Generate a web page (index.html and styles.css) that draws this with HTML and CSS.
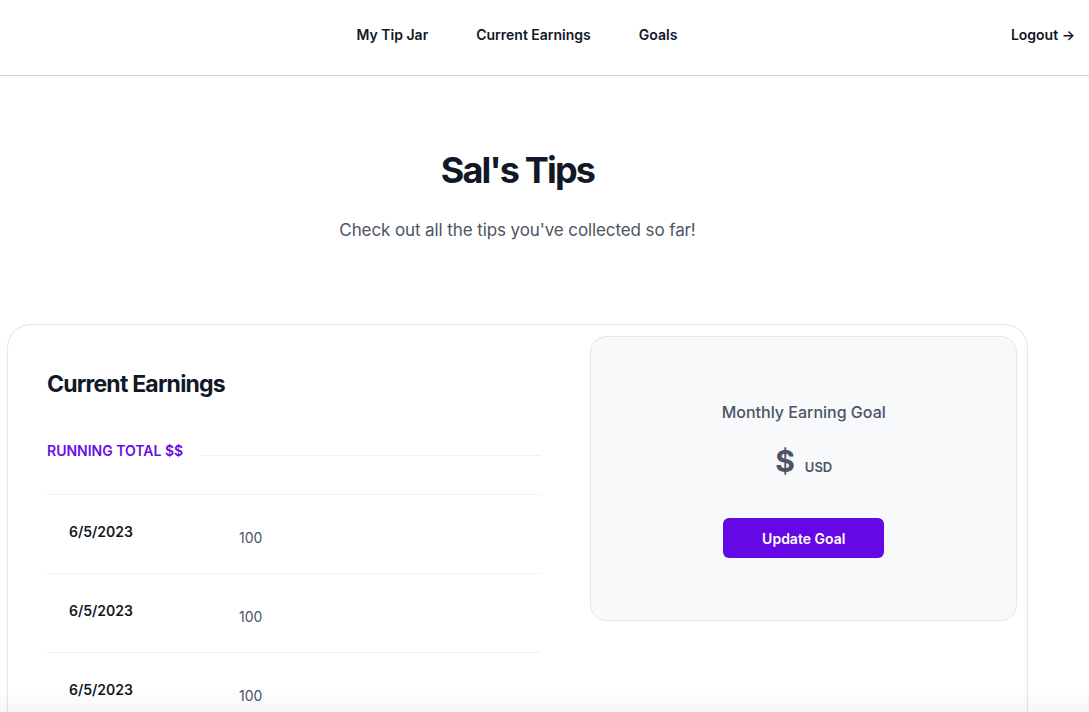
FILE: index.html
```html
<!DOCTYPE html>
<html>
<head>
<meta charset="utf-8">
<link rel="stylesheet" href="styles.css">
</head>
<body>
<nav class="nav">
  <div class="links">
    <a class="link">My Tip Jar</a>
    <a class="link">Current Earnings</a>
    <a class="link">Goals</a>
  </div>
  <a class="logout">Logout <span class="arrow">&rarr;</span></a>
</nav>
<main class="main">
  <header class="hero">
    <h1 class="title">Sal's Tips</h1>
    <p class="subtitle">Check out all the tips you've collected so far!</p>
  </header>
  <section class="card">
    <div class="earnings">
      <h2 class="earn-title">Current Earnings</h2>
      <div class="total-row">
        <span class="total-label">Running Total $$</span>
        <span class="total-line"></span>
      </div>
      <div class="rows">
        <div class="row"><span class="date">6/5/2023</span><span class="amount">100</span></div>
        <div class="row"><span class="date">6/5/2023</span><span class="amount">100</span></div>
        <div class="row"><span class="date">6/5/2023</span><span class="amount">100</span></div>
      </div>
    </div>
    <div class="goal">
      <p class="goal-label">Monthly Earning Goal</p>
      <div class="goal-value"><span class="dollar">$</span><span class="usd">USD</span></div>
      <button class="btn">Update Goal</button>
    </div>
  </section>
</main>
<div class="fade"></div>
</body>
</html>
```
FILE: styles.css
```css
* { box-sizing: border-box; }
html, body { margin: 0; padding: 0; }
body {
  font-family: Inter, "Noto Sans", sans-serif;
  background: #ffffff;
  color: #111827;
  overflow: hidden;
  height: 712px;
}
.nav {
  height: 76px;
  border-bottom: 1px solid #d4d4d8;
  display: flex;
  align-items: center;
  padding-left: 7px;
  padding-right: 14px;
  padding-bottom: 6px;
}
.links {
  flex: 1;
  margin-right: -16px;
  display: flex;
  justify-content: center;
  gap: 48px;
}
.link, .logout {
  font-size: 14px;
  font-weight: 600;
  color: #111827;
  text-decoration: none;
}
.arrow { font-size: 14px; }
.main {
  width: 1021px;
  margin-left: 7px;
}
.hero {
  text-align: center;
  padding-top: 74px;
}
.title {
  margin: 0;
  font-size: 36px;
  font-weight: 700;
  letter-spacing: -1.8px;
  line-height: 40px;
  color: #111827;
}
.subtitle {
  margin: 26px 0 0;
  font-size: 17px;
  letter-spacing: -0.1px;
  line-height: 28px;
  color: #4b5563;
}
.card {
  margin-top: 80px;
  border: 1px solid #e5e7eb;
  border-bottom: none;
  border-radius: 24px 24px 0 0;
  padding: 11px 10px 0 0;
  display: flex;
  gap: 49px;
  height: 400px;
}
.earnings {
  width: 534px;
  padding-left: 39px;
  padding-top: 32px;
}
.earn-title {
  margin: 0;
  font-size: 23px;
  font-weight: 700;
  letter-spacing: -0.8px;
  line-height: 32px;
  color: #111827;
}
.total-row {
  margin-top: 41px;
  display: flex;
  align-items: center;
}
.total-label {
  font-size: 14px;
  font-weight: 600;
  text-transform: uppercase;
  color: #6a0ee3;
  line-height: 20px;
}
.total-line {
  flex: 1;
  height: 1px;
  background: #f0f0f2;
  margin-left: 18px;
  margin-top: 8px;
}
.rows { margin-top: 33px; }
.row {
  height: 79px;
  border-top: 1px solid #f0f1f3;
  display: flex;
  padding-left: 22px;
  padding-top: 27px;
}
.date {
  width: 170px;
  font-size: 14px;
  font-weight: 600;
  color: #111827;
  line-height: 20px;
}
.amount {
  font-size: 14px;
  color: #4b5563;
  line-height: 20px;
  margin-top: 6px;
}
.goal {
  width: 427px;
  height: 285px;
  background: #f8f9fb;
  border: 1px solid #e5e7eb;
  border-radius: 16px;
  display: flex;
  flex-direction: column;
  align-items: center;
  padding-top: 63px;
}
.goal-label {
  margin: 0;
  font-size: 16px;
  font-weight: 500;
  color: #4b5563;
  line-height: 24px;
}
.goal-value {
  margin-top: 19px;
  display: flex;
  align-items: baseline;
  gap: 10px;
  color: #4b5563;
}
.dollar {
  font-size: 30px;
  font-weight: 700;
  line-height: 36px;
}
.usd {
  font-size: 13px;
  font-weight: 600;
}
.btn {
  margin-top: 39px;
  width: 161px;
  height: 40px;
  border: none;
  border-radius: 6px;
  background: #6508e6;
  color: #ffffff;
  font-family: Inter, "Noto Sans", sans-serif;
  font-size: 14px;
  font-weight: 600;
}
.fade {
  position: fixed;
  left: 0;
  right: 0;
  bottom: 0;
  height: 24px;
  background: linear-gradient(to bottom, rgba(0,0,0,0), rgba(0,0,0,0.035));
  pointer-events: none;
}
```
